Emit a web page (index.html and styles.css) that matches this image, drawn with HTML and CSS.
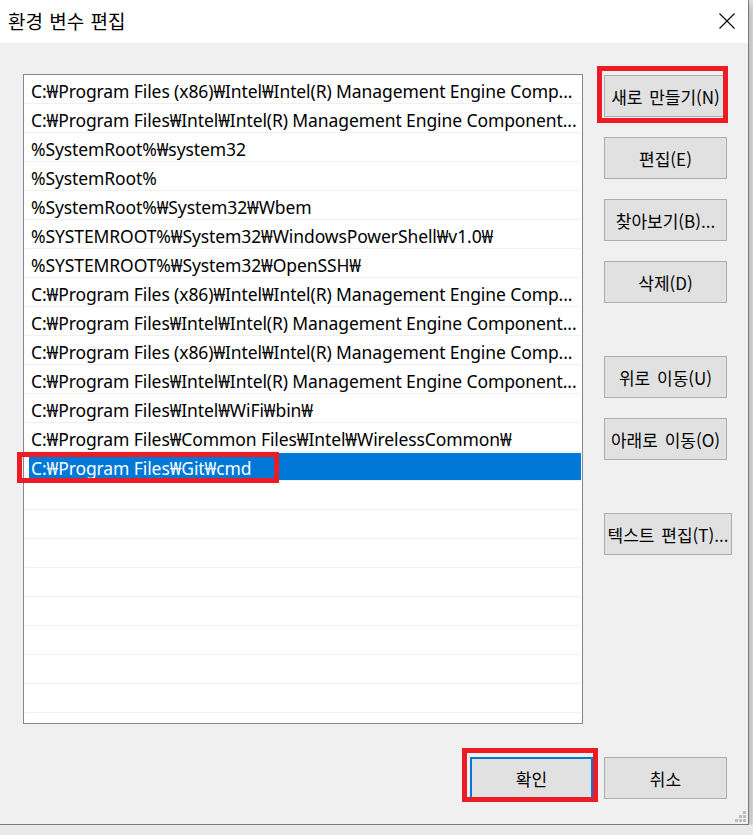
FILE: index.html
```html
<!DOCTYPE html>
<html lang="ko">
<head>
    <meta charset="UTF-8">
    <meta name="viewport" content="width=device-width, initial-scale=1.0">
    <title>환경 변수 편집</title>
    <link rel="stylesheet" href="styles.css">
</head>
<body>
    <div class="window">
        <div class="titlebar">
            <span class="title">환경 변수 편집</span>
            <span class="close">
                <svg width="16" height="16" viewBox="0 0 16 16"><path d="M0.5 0.5 L15.5 15.5 M15.5 0.5 L0.5 15.5" stroke="#000" stroke-width="1.1" fill="none"/></svg>
            </span>
        </div>

        <div class="client">
            <div class="main">
                <div class="path-list">
                    <div class="row">C:₩Program Files (x86)₩Intel₩Intel(R) Management Engine Comp...</div>
                    <div class="row">C:₩Program Files₩Intel₩Intel(R) Management Engine Component...</div>
                    <div class="row">%SystemRoot%₩system32</div>
                    <div class="row">%SystemRoot%</div>
                    <div class="row">%SystemRoot%₩System32₩Wbem</div>
                    <div class="row">%SYSTEMROOT%₩System32₩WindowsPowerShell₩v1.0₩</div>
                    <div class="row">%SYSTEMROOT%₩System32₩OpenSSH₩</div>
                    <div class="row">C:₩Program Files (x86)₩Intel₩Intel(R) Management Engine Comp...</div>
                    <div class="row">C:₩Program Files₩Intel₩Intel(R) Management Engine Component...</div>
                    <div class="row">C:₩Program Files (x86)₩Intel₩Intel(R) Management Engine Comp...</div>
                    <div class="row">C:₩Program Files₩Intel₩Intel(R) Management Engine Component...</div>
                    <div class="row">C:₩Program Files₩Intel₩WiFi₩bin₩</div>
                    <div class="row">C:₩Program Files₩Common Files₩Intel₩WirelessCommon₩</div>
                    <div class="row editing"><span class="edit-box">C:₩Program Files₩Git₩cmd</span></div>
                    <div class="row"></div>
                    <div class="row"></div>
                    <div class="row"></div>
                    <div class="row"></div>
                    <div class="row"></div>
                    <div class="row"></div>
                    <div class="row"></div>
                    <div class="row"></div>
                    <div class="row"></div>
                </div>

                <div class="side">
                    <button class="btn">새로 만들기(N)</button>
                    <button class="btn">편집(E)</button>
                    <button class="btn">찾아보기(B)...</button>
                    <button class="btn">삭제(D)</button>
                    <button class="btn group">위로 이동(U)</button>
                    <button class="btn">아래로 이동(O)</button>
                    <button class="btn group wide">텍스트 편집(T)...</button>
                </div>
            </div>

            <div class="footer">
                <button class="btn default">확인</button>
                <button class="btn">취소</button>
            </div>

            <svg class="grip" width="11" height="11" viewBox="0 0 11 11">
                <rect x="8" y="0" width="3" height="3" fill="#bdbdbd"/>
                <rect x="4" y="4" width="3" height="3" fill="#bdbdbd"/>
                <rect x="8" y="4" width="3" height="3" fill="#bdbdbd"/>
                <rect x="0" y="8" width="3" height="3" fill="#bdbdbd"/>
                <rect x="4" y="8" width="3" height="3" fill="#bdbdbd"/>
                <rect x="8" y="8" width="3" height="3" fill="#bdbdbd"/>
            </svg>
        </div>

        <!-- 강조 표시 -->
        <div class="mark mark-new"></div>
        <div class="mark mark-row"></div>
        <div class="mark mark-ok"></div>
    </div>
</body>
</html>
```

FILE: styles.css
```css
body {
    margin: 0;
    background: #e9e9e9;
    font-family: "Noto Sans", "Noto Sans CJK KR", sans-serif;
    overflow: hidden;
}
.window {
    position: relative;
    width: 748px;
    height: 824px;
    background: #f0f0f0;
    border-right: 1px solid #7a7a7a;
    border-bottom: 1px solid #7a7a7a;
    box-shadow: 2px 3px 9px rgba(0,0,0,0.28);
}
.titlebar {
    height: 43px;
    background: white;
    display: flex;
    align-items: center;
    justify-content: space-between;
}
.title {
    font-family: "Noto Sans CJK KR", sans-serif;
    font-size: 19px;
    word-spacing: 1px;
    color: #000;
    padding-left: 8px;
    padding-bottom: 2px;
}
.close {
    display: flex;
    margin-right: 13px;
    margin-bottom: 2px;
}
.client {
    position: relative;
    height: 781px;
    box-sizing: border-box;
    padding: 31px 21px 0 23px;
}
.main {
    display: flex;
    align-items: flex-start;
}
.path-list {
    flex: none;
    width: 560px;
    height: 650px;
    box-sizing: border-box;
    border: 1px solid #828790;
    background: white;
    padding: 0 1px;
    overflow: hidden;
}
.row {
    border-bottom: 1px solid #f0f0f0;
    padding-left: 6px;
    font-size: 17.5px;
    letter-spacing: -0.1px;
    line-height: 23px;
    padding-top: 5px;
    height: 23px;
    white-space: nowrap;
    overflow: hidden;
    color: #000;
}
.row.editing {
    padding-left: 4px;
    padding-top: 0;
    height: 28px;
}
.edit-box {
    display: block;
    height: 28px;
    margin-top: 1px;
    background: #0078d7;
    color: white;
    padding-left: 2px;
    padding-top: 4px;
    box-sizing: border-box;
    line-height: 23px;
}
.side {
    flex: none;
    width: 123px;
    display: flex;
    flex-direction: column;
    gap: 20px;
    margin-left: 21px;
    padding-top: 1px;
}
.btn {
    flex: none;
    width: 123px;
    height: 42px;
    box-sizing: border-box;
    background: #e1e1e1;
    border: 1px solid #adadad;
    font-family: "Noto Sans CJK KR", sans-serif;
    font-size: 17px;
    word-spacing: 2px;
    color: #000;
    padding: 0;
    white-space: nowrap;
    display: flex;
    align-items: center;
    justify-content: center;
}
.btn.group {
    margin-top: 33px;
}
.btn.wide {
    width: 128px;
}
.btn.default {
    border: 2px solid #0078d7;
}
.footer {
    display: flex;
    justify-content: flex-end;
    gap: 11px;
    margin-top: 33px;
}
.grip {
    position: absolute;
    right: 2px;
    bottom: 2px;
}
.mark {
    position: absolute;
    border: 5px solid #ed1c24;
    box-sizing: border-box;
}
.mark-new {
    left: 597px;
    top: 66px;
    width: 131px;
    height: 57px;
}
.mark-row {
    left: 17px;
    top: 452px;
    width: 262px;
    height: 31px;
}
.mark-ok {
    left: 462px;
    top: 748px;
    width: 136px;
    height: 54px;
}
```
